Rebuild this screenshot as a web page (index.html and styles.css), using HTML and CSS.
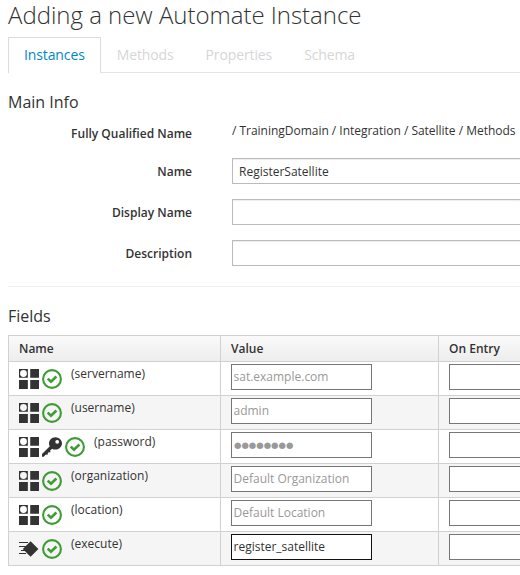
FILE: index.html
```html
<!DOCTYPE html>
<html lang="en">
<head>
<meta charset="utf-8">
<title>Adding a new Automate Instance</title>
<link rel="stylesheet" href="styles.css">
</head>
<body>
<svg class="defs" width="0" height="0" aria-hidden="true">
  <symbol id="attribute" viewBox="0 0 21 21" preserveAspectRatio="none">
    <path fill="#333" fill-rule="evenodd" d="M0 0h9.3v9.3H0zM4.7 1.1a3.6 3.6 0 1 0 0 7.2a3.6 3.6 0 1 0 0-7.2z"/>
    <path fill="#333" d="M11.8 0H21v9.3h-9.2zM0 11.6h9.3V21H0zM11.8 11.6H21V21h-9.2z"/>
  </symbol>
  <symbol id="check" viewBox="0 0 20 20">
    <circle cx="10" cy="10" r="8.9" fill="none" stroke="#3f9c35" stroke-width="2.1"/>
    <path d="M5.7 9.6l3.3 3.2 5.4-5.3" fill="none" stroke="#3f9c35" stroke-width="2.6"/>
  </symbol>
  <symbol id="key" viewBox="0 0 20 20">
    <path fill="#333" fill-rule="evenodd" d="M13.4 0.2C16.8 0.2 20 3 20 6.2C20 9.6 17 12.6 13.2 12.6C12 12.6 11 12.2 10.2 11.7L8.2 13.6L8.4 15.2L5.9 15.4L5.8 17.5L3.6 17.8L1.8 19.8H0V17L7.8 9.3C7.2 8.4 7 7.5 7 6.4C7 3 9.9 0.2 13.4 0.2zM15.2 2.9a1.9 1.9 0 1 0 0 3.8a1.9 1.9 0 1 0 0-3.8z"/>
  </symbol>
  <symbol id="method" viewBox="0 0 21 18">
    <path d="M1 2.5h9M1 6.5h7M3 10.5h5M1 13.5h7" stroke="#333" stroke-width="1.1" fill="none"/>
    <path fill="#333" d="M12.6 1.2l7.8 7.8-7.8 7.8L4.8 9z"/>
  </symbol>
</svg>
<main class="page">
  <h1>Adding a new Automate Instance</h1>
  <ul class="tabs">
    <li class="active">Instances</li>
    <li>Methods</li>
    <li>Properties</li>
    <li>Schema</li>
  </ul>
  <h3>Main Info</h3>
  <form class="info">
    <div class="row fqn"><label>Fully Qualified Name</label><span>/ TrainingDomain / Integration / Satellite / Methods</span></div>
    <div class="row"><label>Name</label><input type="text" value="RegisterSatellite"></div>
    <div class="row"><label>Display Name</label><input type="text"></div>
    <div class="row"><label>Description</label><input type="text"></div>
  </form>
  <hr>
  <h3 class="fields-title">Fields</h3>
  <table>
    <thead><tr><th class="name">Name</th><th class="value">Value</th><th>On Entry</th></tr></thead>
    <tbody>
      <tr><td><div class="cell"><svg class="attr"><use href="#attribute"/></svg><svg class="ok"><use href="#check"/></svg><span>(servername)</span></div></td><td><input type="text" placeholder="sat.example.com"></td><td class="entry"><input type="text"></td></tr>
      <tr><td><div class="cell"><svg class="attr"><use href="#attribute"/></svg><svg class="ok"><use href="#check"/></svg><span>(username)</span></div></td><td><input type="text" placeholder="admin"></td><td class="entry"><input type="text"></td></tr>
      <tr><td><div class="cell"><svg class="attr"><use href="#attribute"/></svg><svg class="key"><use href="#key"/></svg><svg class="ok"><use href="#check"/></svg><span>(password)</span></div></td><td><input class="dots" type="text" placeholder="●●●●●●●●"></td><td class="entry"><input type="text"></td></tr>
      <tr><td><div class="cell"><svg class="attr"><use href="#attribute"/></svg><svg class="ok"><use href="#check"/></svg><span>(organization)</span></div></td><td><input type="text" placeholder="Default Organization"></td><td class="entry"><input type="text"></td></tr>
      <tr><td><div class="cell"><svg class="attr"><use href="#attribute"/></svg><svg class="ok"><use href="#check"/></svg><span>(location)</span></div></td><td><input type="text" placeholder="Default Location"></td><td class="entry"><input type="text"></td></tr>
      <tr><td><div class="cell"><svg class="exec"><use href="#method"/></svg><svg class="ok"><use href="#check"/></svg><span>(execute)</span></div></td><td><input class="filled" type="text" value="register_satellite"></td><td class="entry"><input type="text"></td></tr>
    </tbody>
  </table>
</main>
</body>
</html>
```

FILE: styles.css
```css
* { box-sizing: border-box; }
html, body { margin: 0; height: 575px; overflow: hidden; background: #fff; }
body { font: 12px/20px "Open Sans", sans-serif; color: #333; }
.defs { display: block; }
.page { width: 520px; padding-left: 8px; }
h1 { margin: 0; height: 37px; font-size: 24px; font-weight: 300; line-height: 30px; letter-spacing: -.02px; }
.tabs { display: flex; margin: 0; padding: 0; height: 36px; list-style: none; border-bottom: 1px solid #e4e4e4; font-size: 14px; letter-spacing: -.12px; color: #d6d6d6; }
.tabs li { height: 36px; padding: 7px 15px 0; border: 1px solid transparent; border-bottom: 0; }
.tabs .active { color: #0088ce; border-color: #dcdcdc; background: #fff; }
h3 { margin: 18px 0 0; height: 22px; font-size: 16px; font-weight: 400; line-height: 22px; }
.info { margin-top: 7px; }
.row { display: flex; height: 26px; margin-bottom: 15px; }
.row label { width: 184px; margin-right: 40px; font-weight: 600; text-align: right; line-height: 28px; }
.row input { flex: 1; min-width: 0; padding: 3px 0 1px 6px; border: 1px solid #bbb; border-right: 0; border-radius: 1px 0 0 1px; box-shadow: inset 0 1px 1px rgba(3,3,3,.075); }
.fqn { margin-bottom: 12px; }
.fqn span { line-height: 22px; white-space: nowrap; letter-spacing: -.02px; }
input { font: 12px/20px "Open Sans", sans-serif; color: #333; outline: 0; }
hr { margin: 20px 0 0; border: 0; border-top: 1px solid #ededed; }
.fields-title { margin-top: 18px; }
table { table-layout: fixed; width: 512px; margin-top: 8px; border-spacing: 0; border-top: 1px solid #d1d1d1; }
th { height: 26px; padding: 0 10px; text-align: left; font-weight: 600; line-height: 24px; white-space: nowrap; border-left: 1px solid #d1d1d1; border-bottom: 1px solid #d1d1d1; background: linear-gradient(#fafafa, #ededed); }
.name { width: 212px; }
.value { width: 218px; }
td { height: 34px; padding: 2px 10px 0; vertical-align: top; border-left: 1px solid #d1d1d1; border-bottom: 1px solid #d1d1d1; }
tbody tr:nth-child(even) { background: #f5f5f5; }
td input { display: block; width: 141px; height: 26px; padding: 1px 1px 3px 1.5px; border: 1px solid #767676; background: #fff; }
.entry { padding-right: 0; }
.entry input { width: 100%; border-right: 0; }
td input.filled { border-color: #111; }
::placeholder { color: #999; opacity: 1; }
.dots::placeholder { font: 8.5px/20px "DejaVu Sans", sans-serif; letter-spacing: 0; }
td input.dots { padding: 0 2px 4px 2px; }
.cell { display: flex; height: 29px; }
.cell svg { flex: none; margin-top: 5px; }
.attr { width: 20px; height: 20px; margin-right: 3px; }
.ok { width: 20px; height: 20px; margin-right: 9px; }
.key { width: 20px; height: 20px; margin-right: 3px; }
.cell .exec { width: 21px; height: 18px; margin: 6px 3px 0 -1px; }
.cell span { line-height: 20px; }
```
